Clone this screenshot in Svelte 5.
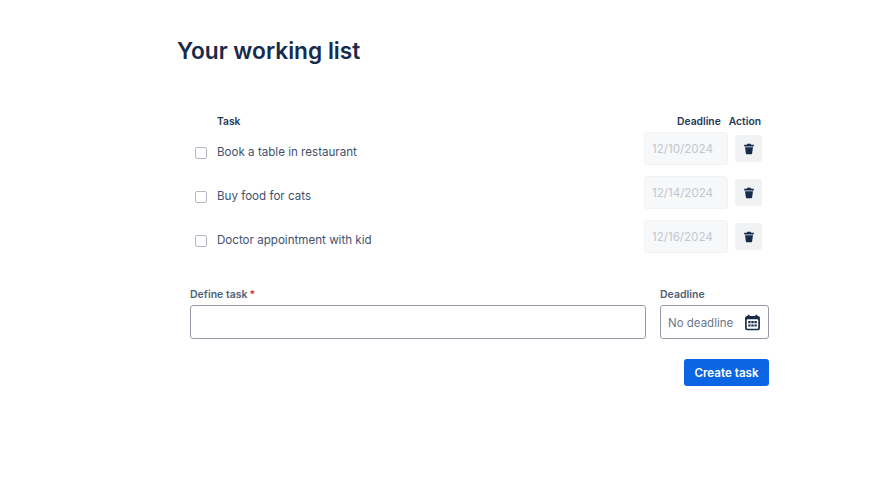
<script lang="ts">
  interface Task {
    readonly title: string;
    readonly deadline: string;
  }

  const tasks: readonly Task[] = [
    { title: "Book a table in restaurant", deadline: "12/10/2024" },
    { title: "Buy food for cats", deadline: "12/14/2024" },
    { title: "Doctor appointment with kid", deadline: "12/16/2024" },
  ];
</script>

<main class="page">
  <h1>Your working list</h1>

  <section class="list">
    <div class="list-head">
      <span class="head-task">Task</span>
      <span class="head-deadline">Deadline</span>
      <span class="head-action">Action</span>
    </div>

    {#each tasks as task}
      <div class="row">
        <span class="check"></span>
        <span class="title">{task.title}</span>
        <span class="date">{task.deadline}</span>
        <button class="trash" type="button" aria-label="Delete">
          <svg width="12" height="12" viewBox="0 0 12 12">
            <path d="M4.3 0.8h3.4l.5 1h2.6v1.6H1.2V1.8h2.6z" fill="#172b4d" />
            <path d="M2 4.3h8l-.9 6.2a.9.9 0 0 1-.9.7H3.8a.9.9 0 0 1-.9-.7z" fill="#172b4d" />
          </svg>
        </button>
      </div>
    {/each}
  </section>

  <form class="form">
    <div class="fields">
      <div class="field field-task">
        <span class="label">Define task<span class="req">*</span></span>
        <div class="input"></div>
      </div>
      <div class="field field-deadline">
        <span class="label">Deadline</span>
        <div class="input input-date">
          <span class="placeholder">No deadline</span>
          <svg width="17" height="17" viewBox="0 0 16 16">
            <path d="M3.5 0.6h1.7v1.2h5.6V0.6h1.7v1.2h.5A2 2 0 0 1 15 3.8v9.6a2 2 0 0 1-2 2H3a2 2 0 0 1-2-2V3.8a2 2 0 0 1 2-2h.5z" fill="#172b4d" />
            <rect x="2.6" y="5" width="10.8" height="8.8" rx="0.8" fill="#fff" />
            <path d="M4 6.6h2.2v2H4zM6.9 6.6h2.2v2H6.9zM9.8 6.6H12v2H9.8zM4 9.8h2.2v2H4zM6.9 9.8h2.2v2H6.9zM9.8 9.8H12v2H9.8z" fill="#172b4d" />
          </svg>
        </div>
      </div>
    </div>
    <div class="actions">
      <button class="submit" type="button">Create task</button>
    </div>
  </form>
</main>

<style>
  :global(body) {
    background: #fff;
    font-family: Inter, "Liberation Sans", sans-serif;
    color: #172b4d;
  }

  .page {
    width: 592px;
    padding: 36px 0 0 177px;
  }

  h1 {
    margin: 0;
    font-size: 22.7px;
    line-height: 30px;
    font-weight: 600;
    color: #172b4d;
  }

  .list {
    margin-top: 49px;
    padding: 0 7px 0 18px;
  }

  .list-head {
    display: flex;
    align-items: center;
    height: 12px;
    font-size: 10.3px;
    font-weight: 600;
    color: #253858;
  }

  .head-task {
    flex: 1;
    margin-left: 22px;
  }

  .head-action {
    margin-left: 8px;
    margin-right: 1px;
  }

  .row {
    display: flex;
    align-items: center;
    height: 44px;
  }

  .check {
    box-sizing: border-box;
    width: 12px;
    height: 12px;
    margin-top: 7px;
    border: 1px solid #b3b9c4;
    border-radius: 2px;
  }

  .title {
    flex: 1;
    margin-top: 6px;
    margin-left: 10px;
    font-size: 11.6px;
    color: #42526e;
  }

  .date {
    box-sizing: border-box;
    width: 84px;
    height: 33px;
    margin-bottom: 1px;
    padding-left: 7px;
    line-height: 32px;
    font-size: 11.6px;
    color: #c1c7d0;
    background: #f7f8f9;
    border: 1px solid #f1f2f4;
    border-radius: 3px;
  }

  .trash {
    display: flex;
    align-items: center;
    justify-content: center;
    width: 27px;
    height: 27px;
    margin-left: 7px;
    margin-bottom: 1px;
    padding: 0;
    border: 0;
    border-radius: 3px;
    background: #f1f2f4;
  }

  .form {
    margin-top: 29px;
    margin-left: 13px;
    width: 579px;
  }

  .fields {
    display: flex;
    gap: 14px;
  }

  .field {
    display: flex;
    flex-direction: column;
    gap: 3px;
  }

  .field-task {
    flex: 1;
  }

  .field-deadline {
    width: 109px;
  }

  .label {
    font-size: 10.5px;
    line-height: 14px;
    font-weight: 600;
    color: #505f79;
  }

  .req {
    margin-left: 2px;
    color: #c9372c;
  }

  .input {
    box-sizing: border-box;
    height: 34px;
    border: 1px solid #959ca8;
    border-radius: 3px;
  }

  .input-date {
    display: flex;
    align-items: center;
    justify-content: space-between;
    padding: 0 7px;
    font-size: 11.5px;
    color: #6b778c;
  }

  .placeholder {
    margin-top: 1px;
  }

  .actions {
    display: flex;
    justify-content: flex-end;
    margin-top: 20px;
  }

  .submit {
    width: 85px;
    height: 27px;
    padding: 0;
    border: 0;
    border-radius: 3px;
    background: #0c66e4;
    color: #fff;
    font-family: inherit;
    font-size: 11.6px;
    font-weight: 600;
  }
</style>
